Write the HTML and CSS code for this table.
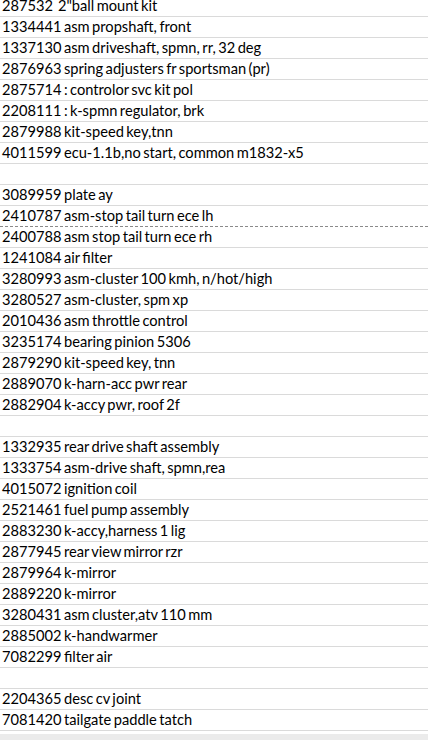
FILE: index.html
```html
<!DOCTYPE html>
<html>
<head>
<meta charset="utf-8">
<link rel="stylesheet" href="styles.css">
</head>
<body>
<div class="sheet">
  <div class="row"><span class="cell">287532  2"ball mount kit</span></div>
  <div class="row"><span class="cell">1334441 asm propshaft, front</span></div>
  <div class="row"><span class="cell">1337130 asm driveshaft, spmn, rr, 32 deg</span></div>
  <div class="row"><span class="cell">2876963 spring adjusters fr sportsman (pr)</span></div>
  <div class="row"><span class="cell">2875714 : controlor svc kit pol</span></div>
  <div class="row"><span class="cell">2208111 : k-spmn regulator, brk</span></div>
  <div class="row"><span class="cell">2879988 kit-speed key,tnn</span></div>
  <div class="row"><span class="cell">4011599 ecu-1.1b,no start, common m1832-x5</span></div>
  <div class="row"><span class="cell"></span></div>
  <div class="row"><span class="cell">3089959 plate ay</span></div>
  <div class="row dashed"><span class="cell">2410787 asm-stop tail turn ece lh</span></div>
  <div class="row"><span class="cell">2400788 asm stop tail turn ece rh</span></div>
  <div class="row"><span class="cell">1241084 air filter</span></div>
  <div class="row"><span class="cell">3280993 asm-cluster 100 kmh, n/hot/high</span></div>
  <div class="row"><span class="cell">3280527 asm-cluster, spm xp</span></div>
  <div class="row"><span class="cell">2010436 asm throttle control</span></div>
  <div class="row"><span class="cell">3235174 bearing pinion 5306</span></div>
  <div class="row"><span class="cell">2879290 kit-speed key, tnn</span></div>
  <div class="row"><span class="cell">2889070 k-harn-acc pwr rear</span></div>
  <div class="row"><span class="cell">2882904 k-accy pwr, roof 2f</span></div>
  <div class="row"><span class="cell"></span></div>
  <div class="row"><span class="cell">1332935 rear drive shaft assembly</span></div>
  <div class="row"><span class="cell">1333754 asm-drive shaft, spmn,rea</span></div>
  <div class="row"><span class="cell">4015072 ignition coil</span></div>
  <div class="row"><span class="cell">2521461 fuel pump assembly</span></div>
  <div class="row"><span class="cell">2883230 k-accy,harness 1 lig</span></div>
  <div class="row"><span class="cell">2877945 rear view mirror rzr</span></div>
  <div class="row"><span class="cell">2879964 k-mirror</span></div>
  <div class="row"><span class="cell">2889220 k-mirror</span></div>
  <div class="row"><span class="cell">3280431 asm cluster,atv 110 mm</span></div>
  <div class="row"><span class="cell">2885002 k-handwarmer</span></div>
  <div class="row"><span class="cell">7082299 filter air</span></div>
  <div class="row"><span class="cell"></span></div>
  <div class="row"><span class="cell">2204365 desc cv joint</span></div>
  <div class="row"><span class="cell">7081420 tailgate paddle tatch</span></div>
</div>
<div class="footer"></div>
</body>
</html>
```

FILE: styles.css
```css
html, body {
  margin: 0;
  padding: 0;
  background: #ffffff;
  overflow: hidden;
}
body {
  width: 428px;
  height: 740px;
  display: flex;
  flex-direction: column;
  font-family: "Lato", "Open Sans", sans-serif;
  color: #000000;
}
.sheet {
  margin-top: -4px;
  display: flex;
  flex-direction: column;
}
.row {
  height: 20px;
  border-bottom: 1px solid #dadada;
  display: flex;
  align-items: flex-end;
}
.row.dashed {
  border-bottom: 1px dashed #8a8a8a;
}
.cell {
  padding: 0 0 1px 2px;
  font-size: 14.67px;
  line-height: 18px;
  word-spacing: -1.3px;
  white-space: pre;
}
.footer {
  margin-top: 3px;
  flex: 1;
  background: #ebebeb;
}
```
